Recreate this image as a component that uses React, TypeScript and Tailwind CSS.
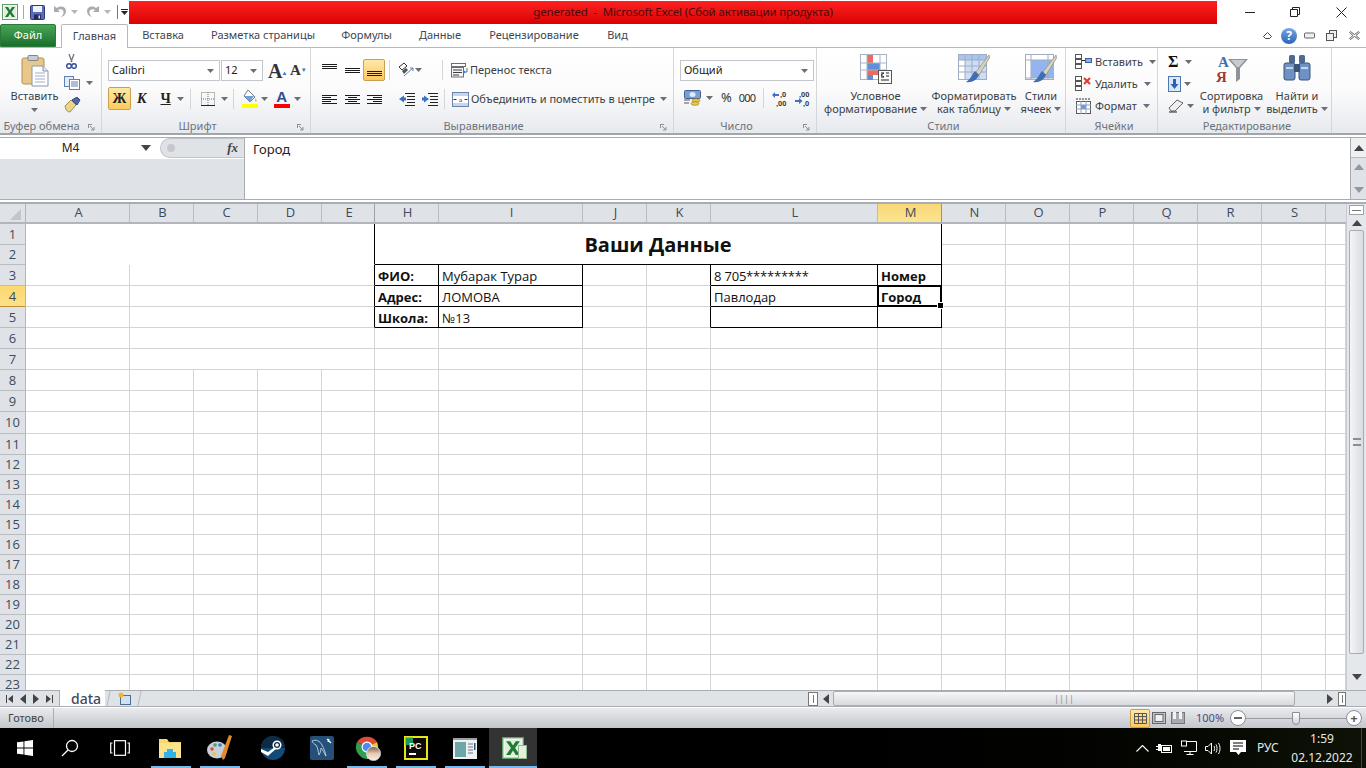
import React from "react";

const uiFont = "font-['Noto_Sans','Open_Sans',sans-serif]";

// small helpers
function Caret({ className = "" }: { className?: string }) {
  return (
    <svg width="7" height="4" viewBox="0 0 7 4" className={`shrink-0 ${className}`}>
      <path d="M0 0h7L3.5 4z" fill="#6b6f75" />
    </svg>
  );
}

function Lines({ rows }: { rows: number[] }) {
  return (
    <svg width="15" height="14" viewBox="0 0 15 14" className="shrink-0">
      {rows.map((y, i) => (
        <rect key={i} x="0" y={y} width="15" height="1" fill="#1c1c1c" />
      ))}
    </svg>
  );
}

function AlignLines({ side }: { side: "l" | "c" | "r" }) {
  const widths = [15, 9, 15, 9, 15];
  return (
    <svg width="15" height="11" viewBox="0 0 15 11" className="shrink-0">
      {widths.map((w, i) => {
        const x = side === "l" ? 0 : side === "r" ? 15 - w : (15 - w) / 2;
        return <rect key={i} x={x} y={i * 2 + 1} width={w} height="1" fill="#1c1c1c" />;
      })}
    </svg>
  );
}

function ExcelIcon({ size = 16 }: { size?: number }) {
  return (
    <svg width={size} height={size} viewBox="0 0 16 16" className="shrink-0">
      <rect x="0.5" y="0.5" width="15" height="15" fill="#f3f8f1" stroke="#5f9c66" />
      <rect x="2" y="2" width="12" height="12" fill="#dfeedd" />
      <path d="M3 3h3l2 3.2L10 3h3l-3.5 5 3.5 5h-3l-2-3.2L6 13H3l3.5-5z" fill="#1f7a35" />
    </svg>
  );
}

function SaveIcon() {
  return (
    <svg width="15" height="15" viewBox="0 0 15 15" className="shrink-0">
      <rect x="0.5" y="0.5" width="14" height="14" rx="1" fill="#5b6db8" stroke="#2e3a78" />
      <rect x="3" y="1" width="9" height="6" fill="#eef1fb" />
      <rect x="4" y="9.5" width="7" height="5" fill="#232a58" />
      <rect x="8.5" y="10.5" width="1.5" height="3" fill="#dfe3f5" />
    </svg>
  );
}

function UndoIcon({ flip = false }: { flip?: boolean }) {
  return (
    <svg width="14" height="14" viewBox="0 0 14 14" className={`shrink-0 ${flip ? "-scale-x-100" : ""}`}>
      <path d="M1 1v6h6L5 5c2-1.500 5-.8 5.500 1.500.4 2-.8 4-2.500 5.500 3-.5 5-3 5-6C13 2 8 0 4 3z" fill="#a9adb3" />
    </svg>
  );
}

function PasteIcon() {
  return (
    <svg width="28" height="32" viewBox="0 0 28 32">
      <rect x="1" y="3" width="22" height="26" rx="2" fill="#e8c78d" stroke="#b58f52" />
      <rect x="7" y="0.5" width="10" height="5" rx="1" fill="#c9ccd1" stroke="#82868c" />
      <path d="M11 11h11l5 5v15H11z" fill="#fff" stroke="#8b96a8" />
      <path d="M22 11v5h5" fill="#e3e8f0" stroke="#8b96a8" />
      <path d="M14 18h10M14 21h10M14 24h10M14 27h10" stroke="#9fb0c9" />
    </svg>
  );
}

function CutIcon() {
  return (
    <svg width="11" height="15" viewBox="0 0 11 15">
      <path d="M3 0l3 8M8 0L5 8" stroke="#6d7480" strokeWidth="1.300" />
      <circle cx="3" cy="12" r="2.300" fill="none" stroke="#33509c" strokeWidth="1.500" />
      <circle cx="8" cy="12" r="2.300" fill="none" stroke="#33509c" strokeWidth="1.500" />
    </svg>
  );
}

function CopyIcon() {
  return (
    <svg width="16" height="14" viewBox="0 0 16 14">
      <rect x="0.500" y="0.500" width="9" height="10" fill="#e4ecf8" stroke="#5f7fb5" />
      <rect x="5.500" y="3.500" width="10" height="10" fill="#fff" stroke="#5f7fb5" />
      <path d="M7 6h7M7 8h7M7 10h7" stroke="#5f7fb5" />
    </svg>
  );
}

function BrushIcon() {
  return (
    <svg width="17" height="16" viewBox="0 0 17 16">
      <path d="M1 9l6-6 5 5-6 7c-2 0-4-1-5-6z" fill="#ecd58a" stroke="#a08b4a" />
      <path d="M8 3l5-3 3 3-3 5z" fill="#4f6aa5" stroke="#34497a" />
    </svg>
  );
}

function FillIcon() {
  return (
    <svg width="16" height="19" viewBox="0 0 16 19">
      <path d="M6 1l7 7-5 5-6-6z" fill="#fff" stroke="#6c7a92" />
      <path d="M2.500 7h9.500L8 13z" fill="#6fa0d8" />
      <path d="M13.500 9c1 1.500 1.500 2.500 1 3.300-.6.700-1.800 0-1.500-1z" fill="#e2b23e" />
      <rect y="15" width="16" height="4" fill="#ffff00" />
    </svg>
  );
}

function OrientIcon() {
  return (
    <svg width="16" height="16" viewBox="0 0 16 16">
      <path d="M1 5l5-4 3 3-5 4z" fill="none" stroke="#333" />
      <path d="M4 9l4-3 2 2-4 4z" fill="#555" />
      <path d="M6 14L15 6M15 6h-3M15 6v3" stroke="#5f7fb5" fill="none" />
    </svg>
  );
}

function Indent({ dir }: { dir: "in" | "out" }) {
  return (
    <svg width="16" height="14" viewBox="0 0 16 14">
      <path d="M6 1.500h10M8 4.500h8M8 7.500h8M8 10.500h8M6 13.500h10" stroke="#222" />
      {dir === "in" ? (
        <path d="M0 7l5-3.500v2h2v3H5v2z" fill="#3b72c4" />
      ) : (
        <path d="M7 7L2 3.500v2H0v3h2v2z" fill="#3b72c4" />
      )}
    </svg>
  );
}

function WrapIcon() {
  return (
    <svg width="17" height="15" viewBox="0 0 17 15">
      <rect x="0.500" y="0.500" width="14" height="3" fill="#fff" stroke="#6e6e6e" />
      <rect x="0.500" y="4.500" width="12" height="9.500" fill="#f2f4f8" stroke="#6e6e6e" />
      <path d="M2 7h9M2 9.500h9M2 12h6" stroke="#3d3d3d" />
      <path d="M16 5v4h-2" stroke="#3b72c4" fill="none" />
      <path d="M12 9l2-1.500v3z" fill="#3b72c4" />
    </svg>
  );
}

function MergeIcon() {
  return (
    <svg width="17" height="15" viewBox="0 0 17 15">
      <rect x="0.500" y="0.500" width="16" height="14" fill="#c4d6ee" stroke="#6e84a6" />
      <rect x="1" y="4" width="15" height="7" fill="#fff" />
      <text x="8.500" y="10" fontSize="7" textAnchor="middle" fill="#222" fontFamily="Liberation Serif, serif">a</text>
      <path d="M1.500 7.500h3M15.500 7.500h-3" stroke="#333" />
    </svg>
  );
}

function CurrencyIcon() {
  return (
    <svg width="17" height="16" viewBox="0 0 17 16">
      <rect x="0.500" y="0.500" width="16" height="8" rx="1" fill="#7a9ed0" stroke="#3f5f94" />
      <ellipse cx="8.500" cy="4.500" rx="3" ry="2.500" fill="#dfe9f7" />
      <ellipse cx="12" cy="10.500" rx="4" ry="1.800" fill="#ecc94f" stroke="#a57f1f" strokeWidth="0.700" />
      <ellipse cx="11" cy="13.500" rx="4" ry="1.800" fill="#ecc94f" stroke="#a57f1f" strokeWidth="0.700" />
      <path d="M0 10h6M0 13h5" stroke="#555" />
    </svg>
  );
}

function DecimalIcon({ more }: { more: boolean }) {
  return (
    <svg width="17" height="17" viewBox="0 0 17 17" fontFamily="Liberation Sans, sans-serif">
      <text x={more ? 4 : 8} y="7" fontSize="7.500" fill="#333" fontWeight="700">{more ? ",00" : ",0"}</text>
      <text x={more ? 8 : 4} y="16" fontSize="7.500" fill="#333" fontWeight="700">{more ? ",0" : ",00"}</text>
      {more ? (
        <path d="M0 11h4V9l3.500 3-3.500 3v-2H0z" fill="#3b72c4" transform="translate(0 -1)" />
      ) : (
        <path d="M7 4H3V2L0 5l3 3V6h4z" fill="#3b72c4" />
      )}
    </svg>
  );
}

function CondIcon() {
  return (
    <svg width="32" height="30" viewBox="0 0 32 30">
      <rect x="0.500" y="0.500" width="26" height="25" fill="#fff" stroke="#a6b4c8" />
      <rect x="7" y="1" width="6" height="8" fill="#ee6a5c" />
      <rect x="7" y="9" width="13" height="7" fill="#5e8fd8" />
      <rect x="7" y="16" width="17" height="5" fill="#ee6a5c" />
      <rect x="7" y="21" width="6" height="5" fill="#5e8fd8" />
      <path d="M0 9h27M0 16h27M7 0v26M20 0v26" stroke="#a6b4c8" fill="none" />
      <rect x="18.500" y="16.500" width="13" height="13" fill="#fafafa" stroke="#555" />
      <path d="M21 19h3l-3 2 3 2h-3M26 19h3M26 22h3M21 26h8" stroke="#222" fill="none" />
    </svg>
  );
}

function TableBrushIcon({ cells }: { cells: boolean }) {
  return (
    <svg width="32" height="30" viewBox="0 0 32 30">
      <rect x="0.500" y="0.500" width="28" height="25" fill="#fff" stroke="#9fadc2" />
      {cells ? (
        <>
          <rect x="1" y="1" width="27" height="5" fill="#a9c4ee" />
          <rect x="7" y="6" width="21" height="19" fill="#cfdcf5" />
          <path d="M0 6h29M0 12h29M0 18h29M7 0v26M14 0v26M21 0v26" stroke="#9fadc2" fill="none" />
        </>
      ) : (
        <>
          <rect x="6" y="6" width="23" height="18" fill="#94b4ef" />
          <path d="M0 6h29M6 0v26M23 0v26M0 24h29" stroke="#9fadc2" fill="none" />
        </>
      )}
      <path d="M31 1L18 18l3 3L31.500 4z" fill="#d9d3c2" stroke="#8f8a7b" strokeWidth="0.700" />
      <path d="M17 17c-3 3-3 7-9 11 6 1 11-2 13-7z" fill="#3e6eb5" />
    </svg>
  );
}

function CellsIcon({ kind }: { kind: "ins" | "del" | "fmt" }) {
  if (kind === "fmt")
    return (
      <svg width="17" height="16" viewBox="0 0 17 16" className="shrink-0">
        <rect x="1.500" y="3.500" width="14" height="12" fill="#fff" stroke="#5a5a5a" />
        <rect x="6" y="7" width="5" height="4" fill="#6c97dd" />
        <path d="M1 7h15M1 11h15M6 3v13M11 3v13" stroke="#8aa0c0" fill="none" />
        <path d="M1 1h15" stroke="#333" strokeDasharray="2 1" />
      </svg>
    );
  return (
    <svg width="17" height="16" viewBox="0 0 17 16" className="shrink-0">
      <rect x="0.500" y="0.500" width="6" height="4" fill="#fff" stroke="#555" />
      <rect x="0.500" y="5.500" width="6" height="4" fill="#fff" stroke="#555" />
      <rect x="0.500" y="10.500" width="6" height="4" fill="#fff" stroke="#555" />
      {kind === "ins" ? (
        <>
          <rect x="10.500" y="4.500" width="6" height="4" fill="#8ab0e6" stroke="#3b5f9a" />
          <path d="M7 6.500h3" stroke="#222" />
        </>
      ) : (
        <path d="M9 2l6 6M15 2L9 8" stroke="#e0392c" strokeWidth="2" />
      )}
    </svg>
  );
}

function SortIcon() {
  return (
    <svg width="32" height="30" viewBox="0 0 32 30" fontFamily="Liberation Serif, serif" fontWeight="700">
      <text x="2" y="13" fontSize="15" fill="#3e6fb5">A</text>
      <text x="0" y="28" fontSize="15" fill="#9c3b32">Я</text>
      <path d="M12 5h20l-8 9v11l-4 3V14z" fill="#8f9296" />
      <path d="M15 6h14l-6 7h-2z" fill="#c8ccd0" />
    </svg>
  );
}

function FindIcon() {
  return (
    <svg width="28" height="28" viewBox="0 0 28 28">
      <rect x="6" y="1" width="6" height="8" rx="1.500" fill="#4c6a94" />
      <rect x="16" y="1" width="6" height="8" rx="1.500" fill="#4c6a94" />
      <rect x="1" y="9" width="11" height="17" rx="2" fill="#6f92c4" stroke="#3c5478" />
      <rect x="16" y="9" width="11" height="17" rx="2" fill="#6f92c4" stroke="#3c5478" />
      <rect x="11" y="10" width="6" height="8" fill="#3c5478" />
      <path d="M3 14h7M18 14h7" stroke="#c6d6ea" strokeWidth="2" />
    </svg>
  );
}

// ribbon group with its caption below
function Group({ width, label, launcher = false, children }: { width: string; label: string; launcher?: boolean; children: React.ReactNode }) {
  return (
    <div className={`${width} shrink-0 h-full flex flex-col border-r border-[#d3d6db] mr-px`}>
      <div className="h-[70px] shrink-0 flex">{children}</div>
      <div className={`flex-1 flex items-center justify-center relative text-[11px] leading-none text-[#6d737b] ${launcher ? "pr-[18px]" : "pl-[4px]"}`}>
        {label}
        {launcher && (
          <svg width="7" height="7" viewBox="0 0 7 7" className="absolute right-[6px] top-[6px]">
            <path d="M0 .5h4M.5 0v4M2 2l4 4M3 6h3V3" stroke="#8b9098" fill="none" />
          </svg>
        )}
      </div>
    </div>
  );
}

function BigButton({ width, icon, lines, className = "" }: { width: string; icon: React.ReactNode; lines: [string, string]; className?: string }) {
  return (
    <div className={`${width} ${className} shrink-0 flex flex-col items-center text-[11px] leading-[13px] text-[#3a3f45]`}>
      <div className="h-[41px] pt-[6px] flex justify-center">{icon}</div>
      <div className="whitespace-nowrap">{lines[0]}</div>
      <div className="whitespace-nowrap flex items-center gap-[3px]">
        {lines[1]}
        <Caret />
      </div>
    </div>
  );
}

function Combo({ width, text, className = "" }: { width: string; text: string; className?: string }) {
  return (
    <div className={`${width} ${className} h-[21px] bg-white border border-[#c3c7cd] flex items-center justify-between pl-[3px] pr-[5px] text-[11px] text-[#222]`}>
      <span>{text}</span>
      <Caret />
    </div>
  );
}

function Ribbon() {
  return (
    <div className="h-[87px] shrink-0 flex bg-gradient-to-b from-white via-[#fbfbfc] to-[#e6e9ed] border-b-2 border-[#a2a6ab]">
      <Group width="w-[102px]" label="Буфер обмена" launcher>
        <div className="w-[64px] flex flex-col items-center pt-[7px] pl-[5px] text-[11px] leading-none text-[#3a3f45]">
          <PasteIcon />
          <div className="mt-[3px] whitespace-nowrap">Вставить</div>
          <Caret className="mt-[7px]" />
        </div>
        <div className="flex flex-col items-start gap-[7px] pt-[6px]">
          <div className="pl-[2px]"><CutIcon /></div>
          <div className="flex items-center gap-[6px]"><CopyIcon /><Caret /></div>
          <BrushIcon />
        </div>
      </Group>

      <Group width="w-[208px]" label="Шрифт" launcher>
        <div className="flex flex-col pt-[12px] pl-[5px] gap-[6px]">
          <div className="flex items-center">
            <Combo width="w-[112px]" text="Calibri" />
            <Combo width="w-[42px]" text="12" className="ml-px" />
            <span className="ml-[5px] w-[21px] font-['Liberation_Serif',serif] font-bold text-[20px] leading-none text-[#333] whitespace-nowrap">A<sup className="text-[#3b72c4] text-[6px] -ml-[1px]">▲</sup></span>
            <span className="ml-[1px] font-['Liberation_Serif',serif] font-bold text-[15px] leading-none text-[#333] whitespace-nowrap">A<sup className="text-[#3b72c4] text-[6px]">▼</sup></span>
          </div>
          <div className="flex items-center h-[23px] font-['Liberation_Serif',serif] font-bold text-[#222]">
            <div className="w-[23px] h-[23px] flex items-center justify-center bg-gradient-to-b from-[#fde9a8] to-[#fdc95c] border border-[#c9a14e] rounded-[2px] text-[14px]">Ж</div>
            <span className="ml-[6px] italic text-[14px]">К</span>
            <span className="ml-[14px] underline text-[14px]">Ч</span>
            <Caret className="ml-[6px]" />
            <div className="ml-[6px] h-[20px] w-px bg-[#d3d6db]" />
            <svg width="14" height="14" viewBox="0 0 14 14" className="ml-[10px]">
              <path d="M.5.500h13v13H.5zM7 0v14M0 7h14" stroke="#777" strokeDasharray="1 1" fill="none" />
              <path d="M0 13.500h14" stroke="#222" />
            </svg>
            <Caret className="ml-[6px]" />
            <div className="ml-[5px] h-[20px] w-px bg-[#d3d6db]" />
            <div className="ml-[8px]"><FillIcon /></div>
            <Caret className="ml-[3px]" />
            <div className="ml-[6px] w-[16px] flex flex-col items-center">
              <span className="font-['Liberation_Sans',sans-serif] text-[15px] leading-[15px] text-[#2b4f91]">A</span>
              <span className="h-[4px] w-[16px] bg-[#ff0000]" />
            </div>
            <Caret className="ml-[4px]" />
          </div>
        </div>
      </Group>

      <Group width="w-[362px]" label="Выравнивание" launcher>
        <div className="flex flex-col pt-[11px] pl-[10px] gap-[7px]">
          <div className="flex items-center h-[22px]">
            <Lines rows={[1, 3, 5]} />
            <div className="ml-[8px]"><Lines rows={[5, 7, 9]} /></div>
            <div className="ml-[3px] w-[22px] h-[22px] flex items-center justify-center bg-gradient-to-b from-[#fde9a8] to-[#fdc95c] border border-[#c9a14e] rounded-[2px]">
              <Lines rows={[8, 10, 12]} />
            </div>
            <div className="ml-[4px] h-[20px] w-px bg-[#d3d6db]" />
            <div className="ml-[8px]"><OrientIcon /></div>
            <Caret className="ml-[1px]" />
            <div className="ml-[20px] h-[20px] w-px bg-[#d3d6db]" />
            <div className="ml-[8px]"><WrapIcon /></div>
            <span className="ml-[2px] font-normal text-[11px] text-[#3a3f45] whitespace-nowrap">Перенос текста</span>
          </div>
          <div className="flex items-center h-[22px]">
            <AlignLines side="l" />
            <div className="ml-[8px]"><AlignLines side="c" /></div>
            <div className="ml-[7px]"><AlignLines side="r" /></div>
            <div className="ml-[17px]"><Indent dir="in" /></div>
            <div className="ml-[7px]"><Indent dir="out" /></div>
            <div className="ml-[6px] h-[20px] w-px bg-[#d3d6db]" />
            <div className="ml-[7px]"><MergeIcon /></div>
            <span className="ml-[2px] text-[11px] text-[#3a3f45] whitespace-nowrap">Объединить и поместить в центре</span>
            <Caret className="ml-[5px]" />
          </div>
        </div>
      </Group>

      <Group width="w-[142px]" label="Число" launcher>
        <div className="flex flex-col pt-[12px] pl-[5px] gap-[6px]">
          <Combo width="w-[134px]" text="Общий" />
          <div className="flex items-center h-[22px] text-[13px] text-[#333]">
            <div className="ml-[4px]"><CurrencyIcon /></div>
            <Caret className="ml-[5px]" />
            <span className="ml-[8px]">%</span>
            <span className="ml-[7px] text-[11px] tracking-[-0.8px]">000</span>
            <div className="ml-[8px] h-[20px] w-px bg-[#d3d6db]" />
            <div className="ml-[8px]"><DecimalIcon more={false} /></div>
            <div className="ml-[6px]"><DecimalIcon more /></div>
          </div>
        </div>
      </Group>

      <Group width="w-[248px]" label="Стили">
        <BigButton width="w-[111px]" className="pl-[4px]" icon={<CondIcon />} lines={["Условное", "форматирование"]} />
        <BigButton width="w-[90px]" icon={<TableBrushIcon cells />} lines={["Форматировать", "как таблицу"]} />
        <BigButton width="w-[44px]" icon={<TableBrushIcon cells={false} />} lines={["Стили", "ячеек"]} />
      </Group>

      <Group width="w-[91px]" label="Ячейки">
        <div className="flex flex-col pt-[6px] pl-[8px] gap-[6px] text-[11px] leading-[16px] text-[#3a3f45]">
          <div className="flex items-center gap-[3px]"><CellsIcon kind="ins" />Вставить<Caret className="ml-[3px]" /></div>
          <div className="flex items-center gap-[3px]"><CellsIcon kind="del" />Удалить<Caret className="ml-[3px]" /></div>
          <div className="flex items-center gap-[3px]"><CellsIcon kind="fmt" />Формат<Caret className="ml-[3px]" /></div>
        </div>
      </Group>

      <Group width="w-[173px]" label="Редактирование">
        <div className="w-[36px] shrink-0 flex flex-col pt-[6px] pl-[9px] gap-[6px]">
          <div className="flex items-center gap-[7px] h-[15px] font-['Liberation_Serif',serif] font-bold text-[16px] leading-none text-[#111]">Σ<Caret /></div>
          <div className="flex items-center gap-[3px] h-[17px]">
            <svg width="13" height="16" viewBox="0 0 13 16">
              <rect x="0.500" y="0.500" width="12" height="15" fill="#dce8f8" stroke="#4a77b5" />
              <path d="M5 3h3v5h2.500L6.500 13 2.500 8H5z" fill="#2a63b8" />
            </svg>
            <Caret />
          </div>
          <div className="flex items-center gap-[2px] h-[15px]">
            <svg width="17" height="14" viewBox="0 0 17 14">
              <path d="M1 9l8-8 6 3-8 8H3z" fill="#eee" stroke="#666" />
              <path d="M1 13h8" stroke="#222" />
            </svg>
            <Caret />
          </div>
        </div>
        <BigButton width="w-[71px]" className="pl-[2px]" icon={<SortIcon />} lines={["Сортировка", "и фильтр"]} />
        <BigButton width="w-[62px]" icon={<FindIcon />} lines={["Найти и", "выделить"]} />
      </Group>
    </div>
  );
}

const tabs: [string, string][] = [
  ["Вставка", "w-[70px]"],
  ["Разметка страницы", "w-[130px]"],
  ["Формулы", "w-[77px]"],
  ["Данные", "w-[70px]"],
  ["Рецензирование", "w-[118px]"],
  ["Вид", "w-[49px]"],
];

// columns of the visible sheet
const columns: [string, string][] = [
  ["A", "w-[104px]"], ["B", "w-[64px]"], ["C", "w-[64px]"], ["D", "w-[64px]"], ["E", "w-[53px]"],
  ["H", "w-[64px]"], ["I", "w-[144px]"], ["J", "w-[64px]"], ["K", "w-[64px]"], ["L", "w-[167px]"],
  ["M", "w-[64px]"], ["N", "w-[64px]"], ["O", "w-[64px]"], ["P", "w-[64px]"], ["Q", "w-[64px]"],
  ["R", "w-[64px]"], ["S", "w-[64px]"],
];

const rowNumbers = Array.from({ length: 23 }, (_, i) => i + 1);
const plainColumns = Array.from({ length: 18 }, (_, i) => i);

function Cell({ className = "", children }: { className?: string; children?: React.ReactNode }) {
  return (
    <div className={`border-r border-b border-[#d4d4d4] overflow-hidden whitespace-nowrap flex items-center text-[13px] text-[#111] ${className}`}>
      {children}
    </div>
  );
}

const black = "border-r-black border-b-black";
const label = `${black} pl-[3px] pt-[4px] font-bold`;
const value = `${black} pl-[3px] pt-[4px]`;

function Sheet() {
  return (
    <div className="grid h-[466px] overflow-hidden grid-cols-[104px_64px_64px_64px_53px_64px_144px_64px_64px_167px_64px_64px_64px_64px_64px_64px_64px_20px] grid-rows-[21px_20px_21px_21px_21px_21px_21px_21px_21px_22px_21px_repeat(12,20px)] font-['Open_Sans','Noto_Sans',sans-serif]">
      <Cell className="col-span-5 row-span-2 border-b-white border-r-black" />
      <Cell className="col-span-6 row-span-2 border-r-black border-b-black justify-center pt-[2px] font-bold text-[20px]">Ваши Данные</Cell>
      {plainColumns.slice(0, 7).map((c) => <Cell key={`r1${c}`} />)}
      {plainColumns.slice(0, 7).map((c) => <Cell key={`r2${c}`} />)}

      <Cell />
      <Cell className="col-span-4 border-r-black" />
      <Cell className={label}>ФИО:</Cell>
      <Cell className={value}>Мубарак Турар</Cell>
      <Cell />
      <Cell className="border-r-black" />
      <Cell className={`${value} tracking-[-0.2px]`}>8 705*********</Cell>
      <Cell className={label}>Номер</Cell>
      {plainColumns.slice(0, 7).map((c) => <Cell key={`r3${c}`} />)}

      <Cell />
      <Cell className="col-span-4 border-r-black" />
      <Cell className={label}>Адрес:</Cell>
      <Cell className={value}>ЛОМОВА</Cell>
      <Cell />
      <Cell className="border-r-black" />
      <Cell className={value}>Павлодар</Cell>
      <Cell className={`${label} relative overflow-visible! z-10`}>
        Город
        <span className="absolute -top-px -left-px -right-px -bottom-px border-2 border-black outline outline-1 outline-white -outline-offset-3" />
        <span className="absolute -right-[3px] -bottom-[3px] w-[5px] h-[5px] bg-black border border-white box-content" />
      </Cell>
      {plainColumns.slice(0, 7).map((c) => <Cell key={`r4${c}`} />)}

      <Cell />
      <Cell className="col-span-4 border-r-black" />
      <Cell className={label}>Школа:</Cell>
      <Cell className={value}>№13</Cell>
      <Cell />
      <Cell className="border-r-black" />
      <Cell className={value} />
      <Cell className={value} />
      {plainColumns.slice(0, 7).map((c) => <Cell key={`r5${c}`} />)}

      {[6, 7].map((r) => (
        <React.Fragment key={r}>
          <Cell />
          <Cell className="col-span-4" />
          {plainColumns.slice(0, 13).map((c) => <Cell key={c} />)}
        </React.Fragment>
      ))}

      {rowNumbers.slice(7).map((r) =>
        plainColumns.map((c) => <Cell key={`${r}-${c}`} />)
      )}
    </div>
  );
}

function ArrowBtn({ dir, color = "#5e6369" }: { dir: "up" | "down" | "left" | "right"; color?: string }) {
  const d = { up: "M0 6h10L5 0z", down: "M0 0h10L5 6z", left: "M6 0v10L0 5z", right: "M0 0v10l6-5z" }[dir];
  const size = dir === "up" || dir === "down" ? [10, 6] : [6, 10];
  return (
    <svg width={size[0]} height={size[1]} viewBox={`0 0 ${size[0]} ${size[1]}`} className="shrink-0">
      <path d={d} fill={color} />
    </svg>
  );
}

function TaskButton({ active = false, open = false, children }: { active?: boolean; open?: boolean; children: React.ReactNode }) {
  return (
    <div className={`h-full flex items-center justify-center relative ${active ? "w-[48px] -ml-[4px] bg-[#333333]" : "w-[49px]"}`}>
      {children}
      {open && <span className={`absolute bottom-0 h-[2px] bg-[#76b9ed] ${active ? "inset-x-0" : "left-[1px] right-[8px]"}`} />}
    </div>
  );
}

function Taskbar() {
  return (
    <div className="h-[40px] shrink-0 flex items-center bg-gradient-to-r from-black via-black to-[#0e1206] text-white">
      <div className="w-[49px] h-full flex items-center justify-center">
        <svg width="16" height="16" viewBox="0 0 16 16">
          <path d="M0 2.300L6.500 1.400v6.200H0zM7.400 1.300L16 0v7.600H7.400zM0 8.400h6.500v6.200L0 13.700zM7.400 8.400H16V16l-8.600-1.300z" fill="#fff" />
        </svg>
      </div>
      <div className="w-[48px] h-full flex items-center justify-center pr-[6px]">
        <svg width="18" height="18" viewBox="0 0 18 18" fill="none" stroke="#fff" strokeWidth="1.300">
          <circle cx="11" cy="7" r="5.500" />
          <path d="M7 11l-6 6" />
        </svg>
      </div>
      <div className="w-[53px] h-full flex items-center justify-center pr-[7px]">
        <svg width="20" height="16" viewBox="0 0 20 16" fill="none" stroke="#fff" strokeWidth="1.200">
          <rect x="4.500" y="0.700" width="11" height="14.600" />
          <path d="M2.500 3H.7v10h1.800M17.500 3h1.800v10h-1.800" />
        </svg>
      </div>

      <TaskButton open>
        <svg width="22" height="20" viewBox="0 0 22 20" className="mr-[9px]">
          <path d="M0 1h8l2 3h12v16H0z" fill="#f9d56e" />
          <rect y="5" width="22" height="15" fill="#fde28c" />
          <path d="M5 20v-6h3v-3h6v3h3v6z" fill="#2fb4ea" />
        </svg>
      </TaskButton>
      <TaskButton open>
        <svg width="26" height="26" viewBox="0 0 26 26" className="mr-[7px]">
          <ellipse cx="10" cy="15" rx="10" ry="8.500" fill="#c7cfd8" />
          <circle cx="5" cy="14" r="1.800" fill="#e14b3e" />
          <circle cx="8" cy="10" r="1.800" fill="#4aa657" />
          <circle cx="13" cy="10" r="1.800" fill="#3e77cf" />
          <circle cx="7" cy="19" r="1.800" fill="#e8c23a" />
          <path d="M25 1l-3-1-8 21 2 4 2-2z" fill="#e08a2c" />
        </svg>
      </TaskButton>
      <TaskButton>
        <svg width="24" height="24" viewBox="0 0 24 24">
          <circle cx="12" cy="12" r="12" fill="#134b78" />
          <path d="M0 12a12 12 0 0 1 24 0z" fill="#0f2a45" />
          <circle cx="16" cy="9" r="3.800" fill="none" stroke="#fff" strokeWidth="1.500" />
          <circle cx="16" cy="9" r="1.800" fill="#fff" />
          <path d="M0 13l7 3 7-5 1 2-6 5-2 2-7-4z" fill="#fff" />
        </svg>
      </TaskButton>
      <TaskButton>
        <svg width="24" height="24" viewBox="0 0 24 24">
          <rect width="24" height="24" rx="2" fill="#25507a" />
          <path d="M2 5c4-2 8 0 10 4s3 6 4 11c-2-3-3-6-5-8 0 3-1 5-2 7-1-4-1-7-3-10C4 8 3 7 2 5z" fill="none" stroke="#d6e4f0" strokeWidth="0.800" />
          <path d="M17 3l4 4M19 3l-1 3" stroke="#fff" strokeWidth="1.200" />
        </svg>
      </TaskButton>
      <TaskButton open>
        <div className="relative w-[26px] h-[26px] mr-[6px]">
          <svg width="24" height="24" viewBox="0 0 24 24">
            <path d="M12 12L2 7a12 12 0 0 1 20 0z" fill="#e04a3a" />
            <path d="M12 12l10-5a12 12 0 0 1-10 17z" fill="#f3c32f" />
            <path d="M12 12v12A12 12 0 0 1 2 7z" fill="#2f9e4f" />
            <circle cx="12" cy="12" r="5.500" fill="#fff" />
            <circle cx="12" cy="12" r="4.300" fill="#4a8af4" />
          </svg>
          <span className="absolute right-0 bottom-0 w-[15px] h-[15px] rounded-full bg-gradient-to-b from-[#7a6252] via-[#e8c8b0] to-[#f2efec] border border-[#ddd]" />
        </div>
      </TaskButton>
      <TaskButton open>
        <svg width="24" height="24" viewBox="0 0 24 24" className="mr-[7px]">
          <rect width="24" height="24" fill="#e7e61d" />
          <rect x="2" y="2" width="20" height="20" fill="#0b0b0b" />
          <rect x="1" y="1" width="8" height="8" fill="#21d789" opacity="0.700" />
          <text x="5" y="13" fontSize="9" fontWeight="700" fill="#fff" fontFamily="Liberation Sans, sans-serif">PC</text>
          <rect x="5" y="17" width="7" height="2" fill="#fff" />
        </svg>
      </TaskButton>
      <TaskButton open>
        <svg width="24" height="21" viewBox="0 0 24 21" className="mr-[7px]">
          <rect width="24" height="21" fill="#eef0f2" />
          <rect y="0" width="24" height="2" fill="#9aa0a6" />
          <rect x="2" y="4" width="11" height="15" fill="#6ea7a8" />
          <path d="M15 6h5M15 9h5M15 12h5M15 15h5" stroke="#6b7a8c" />
          <rect x="21" y="5" width="1.500" height="7" fill="#35527a" />
        </svg>
      </TaskButton>
      <TaskButton active open>
        <div className="relative">
          <ExcelIcon size={22} />
          <span className="absolute -right-[3px] bottom-0 w-[9px] h-[14px] bg-[#e4efe0] border border-[#8fb78f]" />
        </div>
      </TaskButton>

      <div className="ml-auto flex items-center h-full">
        <svg width="13" height="7" viewBox="0 0 13 7" fill="none" stroke="#fff" strokeWidth="1.100">
          <path d="M.5 6.500l6-6 6 6" />
        </svg>
        <svg width="16" height="11" viewBox="0 0 16 11" className="ml-[7px]" fill="none" stroke="#fff">
          <path d="M0 3.500h2M0 6.500h2" />
          <rect x="2.500" y="1.500" width="2" height="6" fill="#fff" />
          <rect x="5.500" y="2.500" width="10" height="7" />
          <rect x="7" y="4" width="7" height="4" fill="#fff" stroke="none" />
        </svg>
        <svg width="16" height="16" viewBox="0 0 16 16" className="ml-[9px]" fill="none" stroke="#fff">
          <path d="M3 1.500h12.500v10H3M9 11.500v3M5.500 14.500h7" />
          <rect x="0.500" y="1" width="5" height="5" fill="#000" />
        </svg>
        <svg width="16" height="13" viewBox="0 0 16 13" className="ml-[8px]" fill="none" stroke="#fff">
          <path d="M.5 4.500h2.500L6.500 1v11L3 8.500H.5zM9 4c.8 1.500.8 3.500 0 5M11 2.500c1.400 2.500 1.400 5.500 0 8M13.500 1c2 3.500 2 7.500 0 11" />
        </svg>
        <svg width="16" height="16" viewBox="0 0 16 16" className="ml-[9px]">
          <path d="M0 0h16v12h-5l-2.500 3L6 12H0z" fill="#fff" />
          <path d="M3 3h10M3 6h10M3 9h6" stroke="#000" />
        </svg>
        <span className="ml-[11px] text-[12px] text-[#e8e8e8] w-[24px]">РУС</span>
        <div className="ml-[7px] w-[68px] flex flex-col items-center text-[12px] leading-[19px] text-[#e8e8e8]">
          <span>1:59</span>
          <span>02.12.2022</span>
        </div>
        <div className="ml-[5px] w-[5px] h-full border-l border-[#444]" />
      </div>
    </div>
  );
}

export default function App() {
  return (
    <div className={`w-[1366px] h-[768px] overflow-hidden flex flex-col bg-white ${uiFont}`}>
      {/* title bar */}
      <div className="h-[24px] shrink-0 flex items-center bg-white">
        <div className="w-[129px] shrink-0 flex items-center pl-[2px]">
          <ExcelIcon />
          <div className="ml-[5px] h-[14px] w-px bg-[#a8a8a8]" />
          <div className="ml-[6px]"><SaveIcon /></div>
          <div className="ml-[8px]"><UndoIcon /></div>
          <Caret className="ml-[4px] opacity-50" />
          <div className="ml-[8px]"><UndoIcon flip /></div>
          <Caret className="ml-[4px] opacity-50" />
          <div className="ml-[6px] h-[14px] w-px bg-[#777]" />
          <svg width="7" height="6" viewBox="0 0 7 6" className="ml-[3px]">
            <path d="M0 0h7v1H0zM0 2h7L3.500 6z" fill="#222" />
          </svg>
        </div>
        <div className="w-[1088px] h-[23px] pl-[20px] flex items-center justify-center bg-gradient-to-b from-[#ff2020] to-[#d80000] text-[11.5px] tracking-[-0.14px] text-[#4a0a0a] whitespace-pre">
          generated  -  Microsoft Excel (Сбой активации продукта)
        </div>
        <div className="flex-1 flex items-center">
          <svg width="10" height="1" viewBox="0 0 10 1" className="ml-[28px]"><rect width="10" height="1" fill="#222" /></svg>
          <svg width="10" height="10" viewBox="0 0 10 10" className="ml-[35px]" fill="none" stroke="#222">
            <path d="M.5 2.500h7v7h-7zM2.500 2.500v-2h7v7h-2" />
          </svg>
          <svg width="11" height="11" viewBox="0 0 11 11" className="ml-[36px]" fill="none" stroke="#222">
            <path d="M.5.500l10 10M10.500.500l-10 10" />
          </svg>
        </div>
      </div>

      {/* ribbon tabs */}
      <div className="h-[24px] shrink-0 flex items-end text-[11px] text-[#3f4650] border-b border-[#b5b9bf] relative">
        <div className="w-[56px] h-[23px] ml-0 flex items-center justify-center rounded-t-[2px] bg-gradient-to-b from-[#4aa657] to-[#1a6e2c] text-white border border-[#2a7a3a]">Файл</div>
        <div className="w-[67px] h-[24px] ml-[5px] -mb-px flex items-center justify-center rounded-t-[2px] bg-white border border-b-0 border-[#b5b9bf]">Главная</div>
        {tabs.map(([t, w]) => (
          <div key={t} className={`${w} h-[23px] flex items-center justify-center`}>{t}</div>
        ))}
        <div className="ml-auto h-[23px] flex items-center pr-[6px] gap-[9px]">
          <svg width="9" height="7" viewBox="0 0 9 7" fill="none" stroke="#444"><path d="M.5 4.500l4-4 4 4-2 2h-4z" /></svg>
          <span className="w-[16px] h-[16px] -mr-[2px] rounded-full bg-gradient-to-b from-[#7aa8e4] to-[#2a63b8] text-white font-bold text-[12px] leading-[16px] text-center">?</span>
          <svg width="11" height="7" viewBox="0 0 11 7" fill="#eef0f2" stroke="#666"><rect x="0.500" y="1" width="10" height="5" rx="1" /></svg>
          <svg width="11" height="11" viewBox="0 0 11 11" fill="#eef0f2" stroke="#555" className="ml-[2px]"><rect x="3.500" y="0.500" width="7" height="7" /><rect x="0.500" y="3.500" width="7" height="7" /></svg>
          <svg width="11" height="9" viewBox="0 0 11 9" fill="#eef0f2" stroke="#666" className="ml-[3px]"><path d="M.5 1.500l1-1 4 3 4-3 1 1-3.500 3 3.500 3-1 1-4-3-4 3-1-1 3.500-3z" /></svg>
        </div>
      </div>

      <Ribbon />

      {/* formula bar */}
      <div className="h-[65px] shrink-0 mt-[2px] flex flex-col border-t border-[#a9adb2]">
        <div className="h-[62px] flex border-b border-[#a9adb2] text-[#222]">
          <div className="w-[245px] shrink-0 flex flex-col bg-[#dfe2e7] border-r border-[#a9adb2]">
            <div className="h-[21px] flex items-center bg-white border-b border-white">
              <div className="w-[160px] flex items-center text-[12px]">
                <span className="w-[141px] text-center">M4</span>
                <ArrowBtn dir="down" color="#444" />
              </div>
              <div className="flex-1 h-full bg-[#dfe2e7] rounded-l-[10px] border border-r-0 border-[#c1c5ca] flex items-center justify-between pl-[6px] pr-[6px]">
                <span className="w-[8px] h-[8px] rounded-full bg-[#c5c8cd]" />
                <span className="font-['Liberation_Serif',serif] italic font-bold text-[13px] text-[#444]">fx</span>
              </div>
            </div>
          </div>
          <div className="flex-1 bg-white pl-[8px] pt-[2px] text-[13px] leading-[18px]">Город</div>
          <div className="w-[16px] shrink-0 bg-[#dfe2e7] border-l border-[#a9adb2] flex flex-col items-center">
            <div className="h-[20px] w-full bg-[#eef0f2] border-b border-[#b9bdc2] flex items-center justify-center"><ArrowBtn dir="up" color="#444" /></div>
            <div className="mt-[6px]"><ArrowBtn dir="up" color="#8d9aa0" /></div>
            <div className="mt-auto mb-[6px]"><ArrowBtn dir="down" color="#8d9aa0" /></div>
          </div>
        </div>
      </div>

      {/* sheet */}
      <div className="flex-1 min-h-0 flex border-t-2 border-[#a9adb2]">
        <div className="w-[1346px] shrink-0 flex flex-col overflow-hidden">
          {/* column headers */}
          <div className="h-[20px] shrink-0 flex bg-[#dfe3e8] border-b-2 border-[#b2b6bb] font-['Open_Sans',sans-serif] text-[13px] text-[#3d4a5c]">
            <div className="w-[26px] shrink-0 border-r border-[#b2b6bb] relative">
              <svg width="11" height="11" viewBox="0 0 11 11" className="absolute right-[4px] bottom-[2px]"><path d="M11 0v11H0z" fill="#c2c6cb" /></svg>
            </div>
            {columns.map(([c, w]) => (
              <div key={c} className={`${w} shrink-0 flex items-center justify-center pl-[2px] border-r ${c === "E" ? "border-[#9ea2a7]" : "border-[#b9bdc2]"} ${c === "M" ? "bg-gradient-to-b from-[#f8d878] to-[#fde490] border-[#c28e33]" : ""}`}>{c}</div>
            ))}
            <div className="flex-1" />
          </div>
          <div className="flex h-[466px]">
            {/* row headers */}
            <div className="w-[26px] shrink-0 grid grid-rows-[21px_20px_21px_21px_21px_21px_21px_21px_21px_22px_21px_repeat(12,20px)] h-[466px] overflow-hidden bg-[#dfe3e8] border-r border-[#b2b6bb] font-['Open_Sans',sans-serif] text-[13px] text-[#3d4a5c]">
              {rowNumbers.map((n) => (
                <div key={n} className={`flex items-center justify-center pt-[1px] border-b ${n === 4 ? "bg-gradient-to-b from-[#fbd970] to-[#fde08a] border-[#c28e33]" : "border-[#b9bdc2]"}`}>{n}</div>
              ))}
            </div>
            <div className="flex-1 overflow-hidden"><Sheet /></div>
          </div>
        </div>
        {/* vertical scrollbar */}
        <div className="flex-1 h-[486px] bg-[#e4e7eb] border-l border-[#c7cbd0] flex flex-col items-center">
          <div className="w-[15px] h-[10px] mt-px bg-white border border-[#9ea2a7] flex items-center justify-center"><span className="w-[9px] h-px bg-[#777]" /></div>
          <div className="mt-[5px]"><ArrowBtn dir="up" color="#444" /></div>
          <div className="mt-[4px] w-[15px] h-[424px] rounded-[2px] bg-gradient-to-r from-[#f4f5f7] to-[#d9dce1] border border-[#a9adb2] flex items-center justify-center">
            <span className="w-[8px] h-[8px] border-y-2 border-double border-[#8a8e93]" />
          </div>
          <div className="mt-auto mb-[10px]"><ArrowBtn dir="down" color="#444" /></div>
        </div>
      </div>

      {/* sheet tabs and status bar */}
      <div className="h-[38px] shrink-0 -mt-[38px] relative flex flex-col">
        <div className="h-[17px] shrink-0 flex items-start bg-[#dfe3e8] border-y border-[#a9adb2]">
          <div className="w-[60px] h-[15px] flex items-center justify-between px-[6px] border-r border-[#a9adb2]">
            <svg width="7" height="8" viewBox="0 0 7 8"><path d="M0 0h1v8H0zM7 0v8L2 4z" fill="#444" /></svg>
            <ArrowBtn dir="left" color="#444" />
            <ArrowBtn dir="right" color="#444" />
            <svg width="7" height="8" viewBox="0 0 7 8"><path d="M6 0h1v8H6zM0 0v8l5-4z" fill="#444" /></svg>
          </div>
          <div className="w-[45px] h-[16px] -mt-px pl-[7px] bg-white flex items-center justify-center text-[14px] font-medium text-[#3f4a5c]">data</div>
          <div className="ml-[3px] w-[32px] h-[15px] flex items-center justify-center -skew-x-12 border-x border-[#b5b9bf]">
            <svg width="13" height="13" viewBox="0 0 13 13" className="skew-x-12">
              <rect x="2.500" y="3.500" width="10" height="9" fill="#cfe0f2" stroke="#4e6d92" />
              <circle cx="3" cy="3" r="2.500" fill="#f0b72e" />
            </svg>
          </div>
          <div className="ml-auto w-[558px] h-[15px] flex items-center">
            <div className="w-[10px] h-[14px] bg-white border border-[#777] flex items-center justify-center"><span className="w-px h-[8px] bg-[#777]" /></div>
            <div className="ml-[3px] w-[10px] flex justify-center"><ArrowBtn dir="left" color="#444" /></div>
            <div className="ml-[2px] w-[462px] h-[15px] rounded-[2px] bg-gradient-to-b from-[#f6f7f8] to-[#d7dade] border border-[#a9adb2] flex items-center justify-center">
              <span className="text-[9px] leading-none text-[#8a8e93]">||||</span>
            </div>
            <div className="ml-[32px] w-[6px] flex justify-center"><ArrowBtn dir="right" color="#444" /></div>
            <div className="ml-[5px] w-[8px] h-[14px] bg-white border border-[#777] flex items-center justify-center"><span className="w-px h-[8px] bg-[#777]" /></div>
          </div>
        </div>
        <div className="h-[21px] flex items-center bg-gradient-to-b from-[#e9ebee] to-[#c3c6cb] text-[11px] text-[#444] border-t border-white">
          <span className="w-[54px] pl-[8px] h-full flex items-center border-r border-[#a9adb2]">Готово</span>
          <div className="ml-auto flex items-center h-full pr-[4px]">
            <div className="w-[20px] h-[19px] flex items-center justify-center bg-gradient-to-b from-[#fde9a8] to-[#fdc95c] border border-[#c9a14e] rounded-[2px]">
              <svg width="13" height="11" viewBox="0 0 13 11"><path d="M.5.500h12v10H.5zM.5 3.500h12M.5 7h12M4.500.500v10M8.500.500v10" stroke="#555" fill="none" /></svg>
            </div>
            <svg width="14" height="12" viewBox="0 0 14 12" className="ml-[2px]"><rect x="0.500" y="0.500" width="13" height="11" fill="#bfc3c8" stroke="#666" /><rect x="3" y="2.500" width="8" height="7" fill="#eef0f2" stroke="#666" /></svg>
            <svg width="14" height="12" viewBox="0 0 14 12" className="ml-[5px]"><rect x="0.500" y="0.500" width="13" height="11" fill="#a7abb0" stroke="#777" /><path d="M2 0h3v7H2zM8 0h3v7H8z" fill="#f2f3f5" /></svg>
            <span className="ml-[11px] w-[27px] text-[#4a4d80]">100%</span>
            <span className="ml-[7px] w-[16px] h-[16px] rounded-full bg-white border border-[#8a8e93] flex items-center justify-center"><span className="w-[8px] h-[2px] bg-[#666]" /></span>
            <div className="w-[100px] relative flex items-center">
              <span className="h-px w-full bg-[#9a9ea3]" />
              <span className="absolute left-[46px] w-[8px] h-[13px] bg-gradient-to-b from-white to-[#d0d3d7] border border-[#8a8e93] rounded-b-[4px]" />
            </div>
            <span className="w-[16px] h-[16px] rounded-full bg-white border border-[#8a8e93] flex items-center justify-center text-[13px] font-bold leading-none text-[#555]">+</span>
          </div>
        </div>
      </div>

      <Taskbar />
    </div>
  );
}
